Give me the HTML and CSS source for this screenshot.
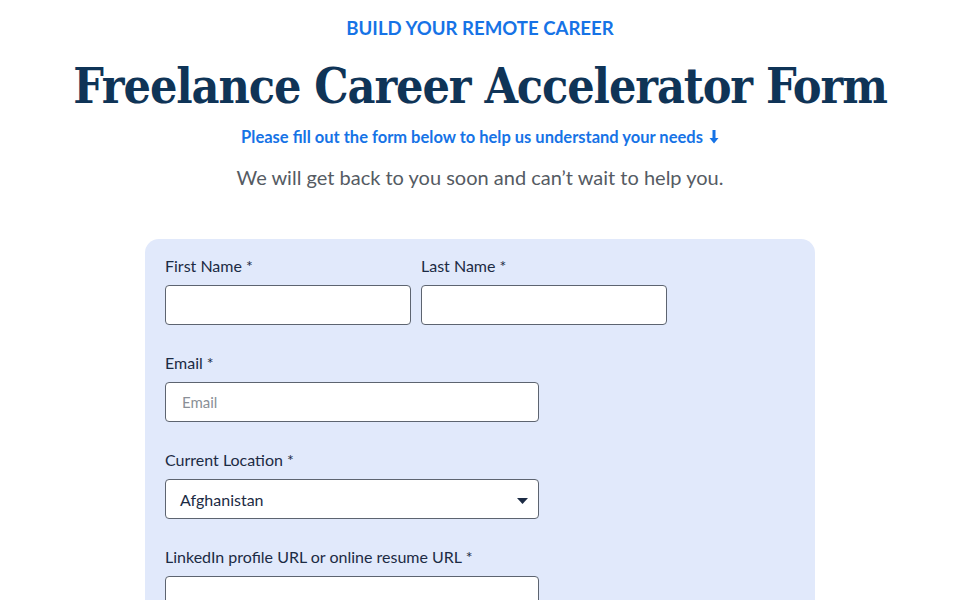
FILE: index.html
```html
<!DOCTYPE html>
<html lang="en">
<head>
<meta charset="utf-8">
<title>Freelance Career Accelerator Form</title>
<link rel="stylesheet" href="styles.css">
</head>
<body>
<header class="intro">
  <p class="eyebrow">BUILD YOUR REMOTE CAREER</p>
  <h1 class="title">Freelance Career Accelerator Form</h1>
  <p class="lead">Please fill out the form below to help us understand your needs <svg class="arrow" viewBox="0 0 10 14" width="10" height="14" aria-hidden="true"><path d="M3.5 0h3v8h3L5 13.5 0.5 8h3z" fill="#1673e6"/></svg></p>
  <p class="note">We will get back to you soon and can’t wait to help you.</p>
</header>
<form class="card">
  <div class="row">
    <label class="field half">
      <span class="label">First Name *</span>
      <input class="input" type="text">
    </label>
    <label class="field half">
      <span class="label">Last Name *</span>
      <input class="input" type="text">
    </label>
  </div>
  <label class="field wide">
    <span class="label">Email *</span>
    <input class="input" type="email" placeholder="Email">
  </label>
  <label class="field wide">
    <span class="label">Current Location *</span>
    <span class="select">
      <span class="select-value">Afghanistan</span>
      <svg class="caret" viewBox="0 0 11 6" width="11" height="6" aria-hidden="true"><path d="M0 0h11L5.5 6z" fill="#1c2b44"/></svg>
    </span>
  </label>
  <label class="field wide">
    <span class="label">LinkedIn profile URL or online resume URL *</span>
    <input class="input" type="url">
  </label>
</form>
</body>
</html>
```
FILE: styles.css
```css
* { box-sizing: border-box; }
html, body { margin: 0; padding: 0; background: #ffffff; }
body {
  font-family: "Lato", "Open Sans", sans-serif;
  color: #1c2b44;
}
.intro {
  display: flex;
  flex-direction: column;
  align-items: center;
  text-align: center;
  padding-top: 17px;
}
.eyebrow {
  margin: 0;
  font-family: "Lato", sans-serif;
  font-weight: 700;
  font-size: 18.6px;
  line-height: 22px;
  color: #1673e6;
}
.title {
  margin: 17px 0 0;
  font-family: "DejaVu Serif", serif;
  font-stretch: condensed;
  font-weight: 700;
  font-size: 48px;
  line-height: 60px;
  color: #0f3457;
  letter-spacing: -1.1px;
}
.lead {
  margin: 11px 0 0;
  font-weight: 700;
  font-size: 16.5px;
  line-height: 20px;
  color: #1673e6;
  display: flex;
  align-items: center;
  gap: 6px;
}
.arrow { display: block; }
.note {
  margin: 17px 0 0;
  font-size: 20px;
  line-height: 26px;
  color: #555b63;
  font-weight: 400;
}
.card {
  width: 670px;
  margin: 49px auto 0;
  background: #e1e9fb;
  border-radius: 14px 14px 0 0;
  padding: 17px 20px 40px;
  display: flex;
  flex-direction: column;
  gap: 28px;
}
.row {
  display: flex;
  gap: 10px;
}
.field {
  display: flex;
  flex-direction: column;
  gap: 9px;
}
.half { width: 246px; }
.wide { width: 374px; }
.label {
  font-size: 16px;
  line-height: 20px;
  color: #1c2b44;
}
.input, .select {
  height: 40px;
  width: 100%;
  border: 1px solid #5d6470;
  border-radius: 4px;
  background: #ffffff;
  font-family: "Lato", sans-serif;
  font-size: 15px;
  color: #1c2b44;
  padding: 0 16px;
  outline: none;
}
.input::placeholder { color: #8a8f97; }
.select {
  display: flex;
  align-items: center;
  justify-content: space-between;
  padding: 0 10px 0 14px;
  font-size: 16px;
}
.caret { display: block; margin-top: 3px; }
```
